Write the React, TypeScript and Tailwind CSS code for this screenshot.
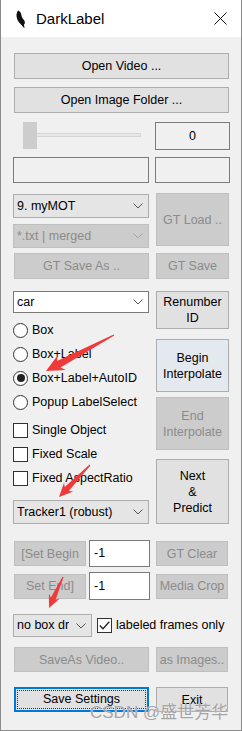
import React from "react";
import clsx from "clsx";

type BtnProps = { children: React.ReactNode; disabled?: boolean; className?: string };

const Btn: React.FC<BtnProps> = ({ children, disabled, className }) => (
  <div
    className={clsx(
      "flex items-center justify-center text-center border leading-[16px]",
      disabled ? "bg-[#cccccc] border-[#bfbfbf] text-[#8b8b8b]" : "bg-[#e1e1e1] border-[#adadad] text-black",
      className
    )}
  >
    {children}
  </div>
);

const Chevron: React.FC<{ color?: string }> = ({ color = "#555" }) => (
  <svg width="10" height="6" viewBox="0 0 10 6" className="shrink-0 ml-auto">
    <polyline points="0.5,0.5 5,5 9.5,0.5" fill="none" stroke={color} strokeWidth="1" />
  </svg>
);

type ComboProps = { text: string; variant: "list" | "edit" | "disabled"; className?: string; textClass?: string };

const Combo: React.FC<ComboProps> = ({ text, variant, className, textClass }) => (
  <div
    className={clsx(
      "flex items-center border pl-[3px] pr-[5px]",
      variant === "list" && "bg-[#e5e5e5] border-[#adadad] text-black",
      variant === "edit" && "bg-white border-[#7a7a7a] text-black",
      variant === "disabled" && "bg-[#cccccc] border-[#bfbfbf] text-[#8b8b8b]",
      className
    )}
  >
    <span className={clsx("overflow-hidden whitespace-nowrap", textClass ?? "flex-1")}>{text}</span>
    <Chevron color={variant === "disabled" ? "#a8a8a8" : "#555"} />
  </div>
);

const Radio: React.FC<{ label: string; checked?: boolean }> = ({ label, checked }) => (
  <div className="flex items-center h-[24px]">
    <div className="w-[15px] h-[15px] rounded-full border border-[#333] bg-white flex items-center justify-center">
      {checked && <div className="w-[8px] h-[8px] rounded-full bg-[#222]" />}
    </div>
    <span className="ml-[4px]">{label}</span>
  </div>
);

const Check: React.FC<{ label: string }> = ({ label }) => (
  <div className="flex items-center h-[24px]">
    <div className="w-[15px] h-[15px] border border-[#333] bg-white" />
    <span className="ml-[4px]">{label}</span>
  </div>
);

// red annotation arrow, tail -> tip
function arrowPoints(tx: number, ty: number, px: number, py: number, head: number, width: number) {
  const dx = px - tx;
  const dy = py - ty;
  const len = Math.sqrt(dx * dx + dy * dy);
  const ux = dx / len;
  const uy = dy / len;
  const nx = -uy;
  const ny = ux;
  const bx = px - ux * head;
  const by = py - uy * head;
  const bx2 = px - ux * head * 0.8;
  const by2 = py - uy * head * 0.8;
  const t0 = 0.6;
  const t1 = width * 0.22;
  const pts = [
    [tx + nx * t0, ty + ny * t0],
    [bx2 + nx * t1, by2 + ny * t1],
    [bx + nx * width / 2, by + ny * width / 2],
    [px, py],
    [bx - nx * width / 2, by - ny * width / 2],
    [bx2 - nx * t1, by2 - ny * t1],
    [tx - nx * t0, ty - ny * t0],
  ];
  return pts.map((p) => p[0].toFixed(1) + "," + p[1].toFixed(1)).join(" ");
}

const App: React.FC = () => {
  return (
    <div className="relative w-[242px] h-[731px] bg-[#f0f0f0] border-x border-b border-[#8a8a8a] font-['Liberation_Sans',Arial,sans-serif] text-[12.5px] text-black overflow-hidden">
      {/* title bar */}
      <div className="h-[37px] bg-white flex items-center">
        <svg width="11" height="19" viewBox="0 0 11 19" className="ml-[14px] mt-[1px]">
          <path
            d="M3 0.5 C1.5 2.5 1 5.5 2 8.5 C2.5 10.5 4 12.5 5.5 14 L9.5 18.5 L9 14.5 C10.5 13.5 10 11 8.5 9.5 C7 8 6.5 5.5 6 3.5 C5.5 2 4.5 1 3 0.5 Z"
            fill="#111"
          />
        </svg>
        <span className="ml-[10px] text-[15px] mt-[1px]">DarkLabel</span>
        <svg width="13" height="13" viewBox="0 0 13 13" className="ml-auto mr-[14px] mt-[-1px]">
          <path d="M0.5 0.5 L12.5 12.5 M12.5 0.5 L0.5 12.5" stroke="#111" strokeWidth="1" />
        </svg>
      </div>

      <div className="pl-[12px] pr-[11px]">
        <Btn className="mt-[16px] h-[26px] mx-px">Open Video ...</Btn>
        <Btn className="mt-[8px] h-[26px] mx-px">Open Image Folder ...</Btn>

        {/* slider + frame */}
        <div className="mt-[9px] flex h-[28px]">
          <div className="relative w-[136px]">
            <div className="absolute left-[10px] top-[11px] w-[118px] h-[4px] bg-[#e7eae7] border border-[#d6d6d6]" />
            <div className="absolute left-[10px] top-0 w-[14px] h-[27px] bg-[#cdcdcd]" />
          </div>
          <div className="ml-[6px] flex-1 border border-[#7a7a7a] flex items-center justify-center">0</div>
        </div>

        <div className="mt-[7px] flex h-[26px]">
          <div className="w-[136px] border border-[#7a7a7a]" />
          <div className="ml-[6px] flex-1 border border-[#7a7a7a]" />
        </div>

        {/* middle columns */}
        <div className="mt-[10px] flex">
          <div className="w-[136px] flex flex-col">
            <Combo text="9. myMOT" variant="list" className="mt-px h-[24px]" />
            <Combo text="*.txt | merged" variant="disabled" className="mt-[6px] h-[24px]" />
            <Btn disabled className="mt-[5px] h-[26px] ml-px">GT Save As ..</Btn>
            <Combo text="car" variant="edit" className="mt-[12px] h-[22px]" />
            <div className="mt-[5px]">
              <Radio label="Box" />
              <Radio label="Box+Label" />
              <Radio label="Box+Label+AutoID" checked />
              <Radio label="Popup LabelSelect" />
            </div>
            <div className="mt-[4px]">
              <Check label="Single Object" />
              <Check label="Fixed Scale" />
              <Check label="Fixed AspectRatio" />
            </div>
            <Combo text="Tracker1 (robust)" variant="list" className="mt-[10px] h-[24px]" />
          </div>
          <div className="ml-[6px] flex-1 flex flex-col px-px">
            <Btn disabled className="h-[53px]">GT Load ..</Btn>
            <Btn disabled className="mt-[7px] h-[26px]">GT Save</Btn>
            <Btn className="mt-[12px] h-[38px]">Renumber<br />ID</Btn>
            <Btn className="mt-[10px] h-[53px] border-[#88a9cc] bg-[#e4e9ef]">Begin<br />Interpolate</Btn>
            <Btn disabled className="mt-[5px] h-[53px]">End<br />Interpolate</Btn>
            <Btn className="mt-[9px] h-[65px]">Next<br />&amp;<br />Predict</Btn>
          </div>
        </div>

        {/* set begin / end rows */}
        <div className="mt-[16px] flex items-center h-[27px]">
          <Btn disabled className="w-[72px] h-[25px] ml-px">[Set Begin</Btn>
          <div className="ml-[3px] w-[61px] h-[27px] bg-white border border-[#7a7a7a] flex items-center pl-[4px]">-1</div>
          <Btn disabled className="ml-[6px] w-[72px] h-[25px]">GT Clear</Btn>
        </div>
        <div className="mt-[5px] flex items-center h-[28px]">
          <Btn disabled className="w-[72px] h-[25px] ml-px">Set End]</Btn>
          <div className="ml-[3px] w-[61px] h-[28px] bg-white border border-[#7a7a7a] flex items-center pl-[4px]">-1</div>
          <Btn disabled className="ml-[6px] w-[72px] h-[25px]">Media Crop</Btn>
        </div>

        <div className="mt-[14px] flex items-center h-[23px]">
          <Combo text="no box draw" variant="list" className="w-[79px] h-[23px] pl-[3px]" textClass="w-[52px]" />
          <div className="ml-[5px] w-[15px] h-[15px] border border-[#333] bg-white flex items-center justify-center">
            <svg width="11" height="9" viewBox="0 0 11 9">
              <polyline points="0.8,4.5 4,7.8 10.3,0.8" fill="none" stroke="#222" strokeWidth="1.3" />
            </svg>
          </div>
          <span className="ml-[4px] whitespace-nowrap">labeled frames only</span>
        </div>

        <div className="mt-[10px] flex h-[25px]">
          <Btn disabled className="w-[135px] ml-px">SaveAs Video..</Btn>
          <Btn disabled className="ml-[7px] w-[72px]">as Images..</Btn>
        </div>

        <div className="mt-[15px] flex h-[25px]">
          <div className="w-[135px] ml-px border-2 border-[#0078d7] bg-[#e1e1e1] p-px">
            <div className="h-full border border-dotted border-[#333] flex items-center justify-center">Save Settings</div>
          </div>
          <Btn className="ml-[7px] w-[72px]">Exit</Btn>
        </div>
      </div>

      {/* annotation overlay */}
      <svg className="absolute left-0 top-0 pointer-events-none" width="242" height="731">
        <polygon points={arrowPoints(113, 335, 45, 371, 18, 17)} fill="#f03a3a" />
        <polygon points={arrowPoints(89, 465, 58, 497, 14, 13)} fill="#f03a3a" />
        <polygon points={arrowPoints(62, 577, 48, 608, 13, 12)} fill="#f03a3a" />
      </svg>

      <div className="absolute left-[89px] top-[700px] text-[17px] text-[#a3a3a3] [text-shadow:0_0_1px_#fff] font-['Liberation_Sans','Noto_Sans_CJK_SC',sans-serif] whitespace-nowrap pointer-events-none">
        CSDN @盛世芳华
      </div>
    </div>
  );
};

export default App;
